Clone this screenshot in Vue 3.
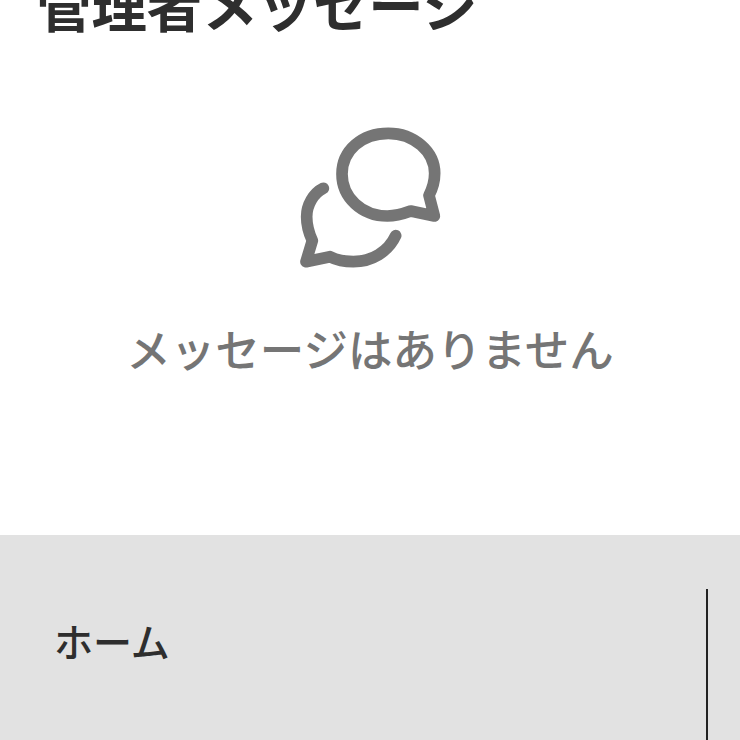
<script setup>
const title = '管理者メッセージ'
const emptyText = 'メッセージはありません'
const navLabel = 'ホーム'
</script>

<template>
  <div class="page">
    <main class="main">
      <h1 class="title">{{ title }}</h1>
      <div class="empty">
        <svg class="icon" viewBox="0 0 540 510" fill="none" stroke="#757575" stroke-width="35" stroke-linecap="round" stroke-linejoin="round">
          <path d="M463 318 L392 303 C365 313 345 318 322 318 C245 318 186 262 186 192 C186 122 245 70 325 70 C402 70 464 125 464 190 C464 215 458 235 447 256 Z" />
          <path d="M130 235 C100 250 80 285 80 320 C80 345 87 370 97 392 L78 455 L150 440 C170 450 190 455 220 455 C275 455 325 425 347 377" />
        </svg>
        <p class="empty-text">{{ emptyText }}</p>
      </div>
    </main>
    <nav class="nav">
      <div class="nav-item">{{ navLabel }}</div>
      <div class="nav-next"></div>
    </nav>
  </div>
</template>

<style scoped>
.page {
  width: 740px;
  height: 740px;
  overflow: hidden;
  display: flex;
  flex-direction: column;
  background: #fff;
  font-family: "Noto Sans CJK JP", "Noto Sans", sans-serif;
}
.main {
  height: 535px;
  flex: none;
}
.title {
  margin: -32px 0 0;
  padding-left: 36px;
  font-size: 55.4px;
  line-height: 70px;
  font-weight: 700;
  color: #2e2e2e;
}
.empty {
  display: flex;
  flex-direction: column;
  align-items: center;
  margin-top: 72px;
}
.icon {
  width: 180px;
  height: 170px;
}
.empty-text {
  margin: 36px 0 0;
  font-size: 44.5px;
  line-height: 64px;
  font-weight: 500;
  color: #757575;
}
.nav {
  flex: 1;
  display: flex;
  background: #e2e2e2;
  padding-top: 54px;
}
.nav-item {
  flex: 1;
  padding: 26px 0 0 54px;
  font-size: 39px;
  line-height: 50px;
  font-weight: 500;
  color: #2e2e2e;
}
.nav-next {
  width: 32px;
  border-left: 2px solid #222;
}
</style>
